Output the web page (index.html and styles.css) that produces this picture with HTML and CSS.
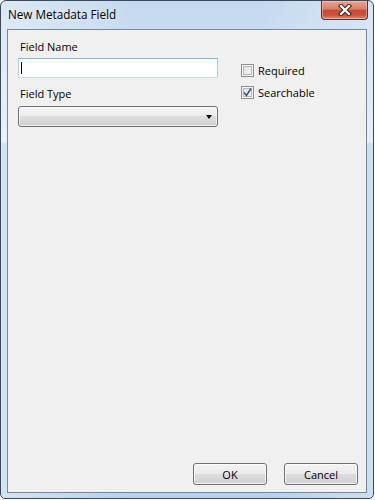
FILE: index.html
```html
<!DOCTYPE html>
<html lang="en">
<head>
  <meta charset="UTF-8">
  <title>New Metadata Field</title>
  <link rel="stylesheet" href="styles.css">
</head>
<body>

<div class="window">
  <div class="titlebar">
    <span class="title">New Metadata Field</span>
    <button class="close" title="Close">
      <svg width="14" height="12" viewBox="0 0 14 12">
        <path d="M3 2 L11 10 M11 2 L3 10" stroke="#3b2420" stroke-width="4.2" stroke-linecap="square" fill="none"/>
        <path d="M3 2 L11 10 M11 2 L3 10" stroke="#ffffff" stroke-width="2.2" stroke-linecap="square" fill="none"/>
      </svg>
    </button>
  </div>

  <div class="client">
    <div class="fields">
      <div class="left">
        <label class="label">Field Name</label>
        <div class="textbox"><span class="caret"></span></div>
        <label class="label type">Field Type</label>
        <div class="combo"><span class="arrow"></span></div>
      </div>
      <div class="right">
        <div class="check"><span class="box"></span>Required</div>
        <div class="check">
          <span class="box">
            <svg width="9" height="9" viewBox="0 0 9 9">
              <path d="M1 4.5 L3.5 7.5 L8 0.5" stroke="#3a5494" stroke-width="1.6" fill="none"/>
            </svg>
          </span>Searchable
        </div>
      </div>
    </div>

    <div class="buttons">
      <button class="btn">OK</button>
      <button class="btn">Cancel</button>
    </div>
  </div>
</div>

</body>
</html>
```

FILE: styles.css
```css
body {
  margin: 0;
  background: #ffffff;
  font-family: "Open Sans", "Noto Sans", sans-serif;
  font-size: 11px;
  color: #000000;
}

.window {
  width: 374px;
  height: 499px;
  box-sizing: border-box;
  border: 1px solid #3b4a5b;
  border-radius: 6px 6px 5px 5px;
  padding: 0 6px 5px 6px;
  display: flex;
  flex-direction: column;
  background:
    linear-gradient(to right, rgba(255,255,255,0.4), rgba(255,255,255,0) 35%, rgba(255,255,255,0) 70%, rgba(255,255,255,0.3)),
    linear-gradient(to bottom, #c4d9ef 0, #d3e3f4 110px, #dde9f6 141px, #b8d0ea 143px, #b8d0ea 100%);
}

.titlebar {
  height: 28px;
  display: flex;
  align-items: flex-start;
  margin-right: -1px;
}

.title {
  padding: 6px 0 0 1px;
  line-height: 15px;
  font-size: 11.7px;
  text-shadow: 0 0 6px rgba(255,255,255,0.9);
}

.close {
  margin-left: auto;
  width: 47px;
  height: 19px;
  padding: 0;
  border: 1px solid #5b2f26;
  border-top: none;
  border-radius: 0 0 4px 4px;
  background: linear-gradient(to bottom, #e6a597 0, #d77d6a 45%, #c34a31 52%, #c9553d 80%, #e0907a 100%);
  box-shadow: inset 0 0 0 1px rgba(255,220,210,0.45);
  display: flex;
  justify-content: center;
  align-items: center;
}

.client {
  flex: 1;
  border: 1px solid #76889c;
  background: #f0f0f0;
  padding: 9px 8px 7px 10px;
  display: flex;
  flex-direction: column;
}

.fields {
  display: flex;
}

.left {
  width: 200px;
  display: flex;
  flex-direction: column;
}

.label {
  line-height: 15px;
  padding-left: 2px;
}

.label.type {
  margin-top: 8px;
}

.textbox {
  margin-top: 4px;
  height: 20px;
  box-sizing: border-box;
  border: 1px solid;
  border-color: #8fb3d6 #b3cde6 #c6dcf0 #b3cde6;
  background: #ffffff;
  display: flex;
  align-items: center;
  padding-left: 2px;
}

.caret {
  width: 1px;
  height: 12px;
  background: #000000;
}

.combo {
  margin-top: 5px;
  height: 21px;
  box-sizing: border-box;
  border: 1px solid #707070;
  border-radius: 3px;
  background: linear-gradient(to bottom, #f3f3f3 0, #ebebeb 50%, #dddddd 50%, #d0d0d0 100%);
  box-shadow: inset 0 0 0 1px rgba(255,255,255,0.6);
  display: flex;
  justify-content: flex-end;
  align-items: center;
  padding-right: 5px;
}

.arrow {
  width: 0;
  height: 0;
  border-left: 3.5px solid transparent;
  border-right: 3.5px solid transparent;
  border-top: 4px solid #000000;
}

.right {
  margin-left: 23px;
  padding-top: 23px;
  display: flex;
  flex-direction: column;
  gap: 5px;
}

.check {
  display: flex;
  align-items: center;
  line-height: 17px;
}

.box {
  width: 13px;
  height: 13px;
  box-sizing: border-box;
  border: 1px solid #8e8f8f;
  background: linear-gradient(135deg, #dcdcdc, #fbfbfb);
  box-shadow: inset 0 0 0 1px #f4f4f4, inset 0 0 0 2px #b8b8b8;
  margin-right: 4px;
  display: flex;
  justify-content: center;
  align-items: center;
}

.buttons {
  margin-top: auto;
  display: flex;
  justify-content: flex-end;
  gap: 17px;
}

.btn {
  width: 74px;
  height: 22px;
  padding: 0;
  font-family: "Open Sans", "Noto Sans", sans-serif;
  font-size: 11px;
  color: #000000;
  border: 1px solid #707070;
  border-radius: 3px;
  background: linear-gradient(to bottom, #f3f3f3 0, #ebebeb 50%, #dddddd 50%, #d0d0d0 100%);
  box-shadow: inset 0 0 0 1px rgba(255,255,255,0.7);
}
```
